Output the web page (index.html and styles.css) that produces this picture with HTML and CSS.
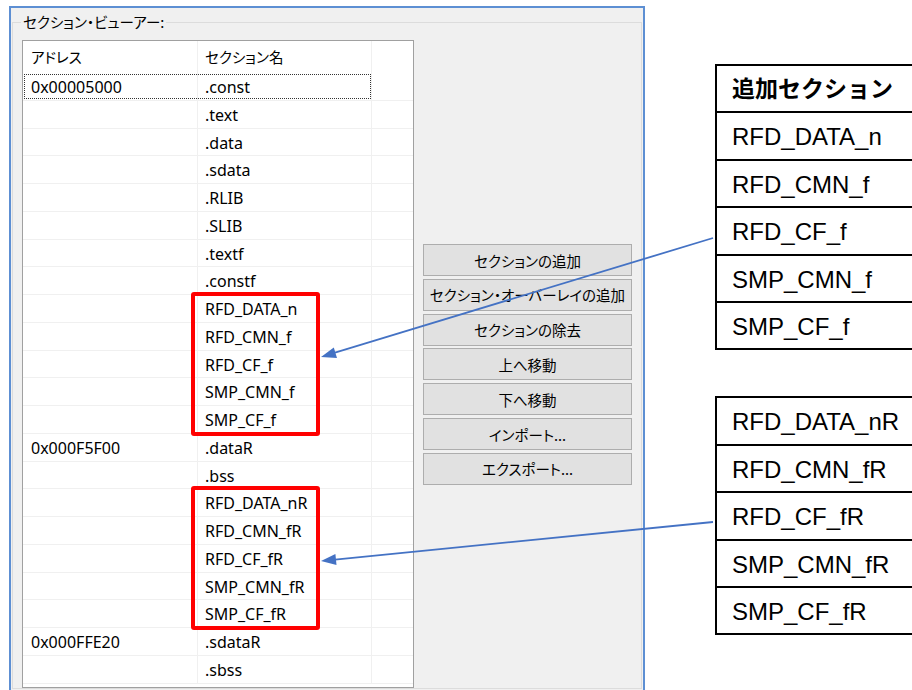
FILE: index.html
```html
<!DOCTYPE html>
<html>
<head>
	<title>セクション・ビューアー</title>
	<link rel="stylesheet" href="styles.css">
</head>
<body>
	<div class="page">
		<div class="window">
			<fieldset class="group">
				<legend class="jp">セクション・ビューアー:</legend>
				<div class="group-body">
					<div class="listview">
						<div class="lv-head">
							<div class="cell jp">アドレス</div>
							<div class="cell jp">セクション名</div>
							<div class="cell"></div>
						</div>
						<div class="lv-row focused"><div class="cell">0x00005000</div><div class="cell">.const</div><div class="cell"></div></div>
						<div class="lv-row"><div class="cell"></div><div class="cell">.text</div><div class="cell"></div></div>
						<div class="lv-row"><div class="cell"></div><div class="cell">.data</div><div class="cell"></div></div>
						<div class="lv-row"><div class="cell"></div><div class="cell">.sdata</div><div class="cell"></div></div>
						<div class="lv-row"><div class="cell"></div><div class="cell">.RLIB</div><div class="cell"></div></div>
						<div class="lv-row"><div class="cell"></div><div class="cell">.SLIB</div><div class="cell"></div></div>
						<div class="lv-row"><div class="cell"></div><div class="cell">.textf</div><div class="cell"></div></div>
						<div class="lv-row"><div class="cell"></div><div class="cell">.constf</div><div class="cell"></div></div>
						<div class="lv-row"><div class="cell"></div><div class="cell">RFD_DATA_n</div><div class="cell"></div></div>
						<div class="lv-row"><div class="cell"></div><div class="cell">RFD_CMN_f</div><div class="cell"></div></div>
						<div class="lv-row"><div class="cell"></div><div class="cell">RFD_CF_f</div><div class="cell"></div></div>
						<div class="lv-row"><div class="cell"></div><div class="cell">SMP_CMN_f</div><div class="cell"></div></div>
						<div class="lv-row"><div class="cell"></div><div class="cell">SMP_CF_f</div><div class="cell"></div></div>
						<div class="lv-row"><div class="cell">0x000F5F00</div><div class="cell">.dataR</div><div class="cell"></div></div>
						<div class="lv-row"><div class="cell"></div><div class="cell">.bss</div><div class="cell"></div></div>
						<div class="lv-row"><div class="cell"></div><div class="cell">RFD_DATA_nR</div><div class="cell"></div></div>
						<div class="lv-row"><div class="cell"></div><div class="cell">RFD_CMN_fR</div><div class="cell"></div></div>
						<div class="lv-row"><div class="cell"></div><div class="cell">RFD_CF_fR</div><div class="cell"></div></div>
						<div class="lv-row"><div class="cell"></div><div class="cell">SMP_CMN_fR</div><div class="cell"></div></div>
						<div class="lv-row"><div class="cell"></div><div class="cell">SMP_CF_fR</div><div class="cell"></div></div>
						<div class="lv-row"><div class="cell">0x000FFE20</div><div class="cell">.sdataR</div><div class="cell"></div></div>
						<div class="lv-row"><div class="cell"></div><div class="cell">.sbss</div><div class="cell"></div></div>

						<!-- 赤枠 -->
						<div class="mark mark-rom"></div>
						<div class="mark mark-ram"></div>
					</div>

					<div class="buttons">
						<button class="btn jp">セクションの追加</button>
						<button class="btn jp">セクション・オーバーレイの追加</button>
						<button class="btn jp">セクションの除去</button>
						<button class="btn jp">上へ移動</button>
						<button class="btn jp">下へ移動</button>
						<button class="btn jp">インポート...</button>
						<button class="btn jp">エクスポート...</button>
					</div>
				</div>
			</fieldset>
		</div>

		<div class="refs">
			<div class="ref-table">
				<div class="ref-row ref-head">追加セクション</div>
				<div class="ref-row">RFD_DATA_n</div>
				<div class="ref-row">RFD_CMN_f</div>
				<div class="ref-row">RFD_CF_f</div>
				<div class="ref-row">SMP_CMN_f</div>
				<div class="ref-row">SMP_CF_f</div>
			</div>
			<div class="ref-table">
				<div class="ref-row">RFD_DATA_nR</div>
				<div class="ref-row">RFD_CMN_fR</div>
				<div class="ref-row">RFD_CF_fR</div>
				<div class="ref-row">SMP_CMN_fR</div>
				<div class="ref-row">SMP_CF_fR</div>
			</div>
		</div>
	</div>

	<!-- 矢印 -->
	<svg class="arrows" width="912" height="690" viewBox="0 0 912 690">
		<line x1="713" y1="238" x2="335" y2="352.6" stroke="#4472c4" stroke-width="1.8"/>
		<polygon points="321,357 337,357.9 333.8,347.4" fill="#4472c4"/>
		<line x1="713" y1="522" x2="335" y2="559.6" stroke="#4472c4" stroke-width="1.8"/>
		<polygon points="321,561 336.5,565 335.4,554" fill="#4472c4"/>
	</svg>
</body>
</html>
```

FILE: styles.css
```css
html, body {
	margin: 0;
	height: 690px;
	overflow: hidden;
	background-color: #fff;
}
body {
	position: relative;
	font-family: "Noto Sans", "Noto Sans CJK JP", sans-serif;
	color: #000;
}
.jp {
	font-family: "Noto Sans CJK JP", sans-serif;
	font-feature-settings: "palt";
	font-size: 14.5px;
}
.page {
	display: flex;
	align-items: flex-start;
}
.window {
	flex: none;
	box-sizing: border-box;
	width: 636px;
	height: 700px;
	margin: 6px 0 0 9px;
	border: 2px solid #5d8fd3;
	border-bottom: none;
	background-color: #f0f0f0;
}
.group {
	margin: 4px 1px 0 1px;
	padding: 8px 0 0 9px;
	border: 1px solid #dcdcdc;
	min-width: 0;
}
.group legend {
	padding: 0 2px;
	margin-left: -1px;
	line-height: 20px;
	color: #000;
}
.group-body {
	display: flex;
	align-items: flex-start;
}
.listview {
	position: relative;
	box-sizing: border-box;
	width: 392px;
	height: 648px;
	border: 1px solid #a0a0a0;
	background-color: #fff;
}
.lv-head, .lv-row {
	display: grid;
	grid-template-columns: 175px 174px 1fr;
}
.lv-head {
	height: 32px;
	line-height: 32px;
}
.lv-row {
	position: relative;
	box-sizing: border-box;
	height: 27.76px;
	line-height: 28px;
	border-bottom: 1px solid #f0f0f0;
	font-size: 16px;
}
.cell {
	padding-left: 7px;
	border-right: 1px solid #f0f0f0;
	white-space: nowrap;
	overflow: hidden;
}
.lv-head .cell:first-child, .lv-row .cell:first-child {
	padding-left: 8px;
}
.cell:last-child {
	border-right: none;
}
.lv-row.focused::before {
	content: "";
	position: absolute;
	left: 1px;
	top: 1px;
	width: 347px;
	height: 25px;
	box-sizing: border-box;
	border: 1px dotted #333;
}
.mark {
	position: absolute;
	left: 168px;
	width: 129px;
	height: 144px;
	box-sizing: border-box;
	border: 4px solid #ff0000;
	border-radius: 3px;
}
.mark-rom {
	top: 251px;
}
.mark-ram {
	top: 445px;
}
.buttons {
	display: flex;
	flex-direction: column;
	gap: 2.83px;
	margin: 204px 0 0 9px;
}
.btn {
	width: 209px;
	height: 32px;
	padding: 0;
	border: 1px solid #adadad;
	background-color: #e1e1e1;
	color: #000;
	white-space: nowrap;
}
.refs {
	display: flex;
	flex-direction: column;
	gap: 46px;
	margin-left: 70px;
	padding-top: 64px;
}
.ref-table {
	width: 230px;
	border: 2px solid #000;
	border-right: none;
	font-family: "Liberation Sans", "Noto Sans CJK JP", sans-serif;
	font-size: 24px;
}
.ref-row {
	height: 45.4px;
	line-height: 47px;
	padding-left: 15px;
	border-top: 2px solid #000;
	white-space: nowrap;
}
.ref-row:first-child {
	border-top: none;
}
.ref-head {
	font-weight: bold;
	font-size: 23px;
}
.arrows {
	position: absolute;
	left: 0;
	top: 0;
	pointer-events: none;
}
```
